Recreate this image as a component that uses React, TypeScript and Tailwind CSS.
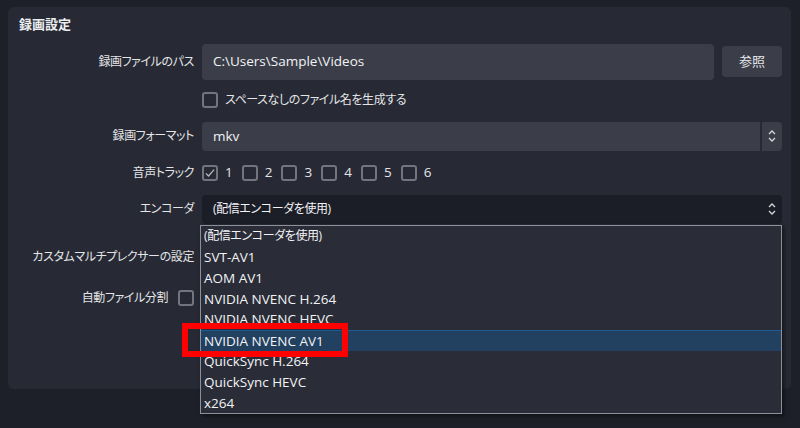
import React from "react";

const FONT = "font-['Open_Sans','Noto_Sans_CJK_JP',sans-serif] [font-feature-settings:'palt']";
// Japanese text renders a bit wider than the original UI font, so tighten it
const JP = "text-[12px] tracking-[-0.4px]";

const encoders = [
  "(配信エンコーダを使用)",
  "SVT-AV1",
  "AOM AV1",
  "NVIDIA NVENC H.264",
  "NVIDIA NVENC HEVC",
  "NVIDIA NVENC AV1",
  "QuickSync H.264",
  "QuickSync HEVC",
  "x264",
];

function Box({ checked = false }: { checked?: boolean }) {
  return (
    <span className="flex h-4 w-4 shrink-0 items-center justify-center rounded-[3px] border-2 border-[#72757e]">
      {checked && (
        <svg viewBox="0 0 16 16" className="h-3 w-3" fill="none" stroke="#b8bac0" strokeWidth="1.6">
          <path d="M2.5 8.5 L6 12 L13.5 3.5" />
        </svg>
      )}
    </span>
  );
}

function Chevrons() {
  return (
    <svg viewBox="0 0 10 16" className="h-4 w-[10px]" fill="none" stroke="#d6d7db" strokeWidth="1.3">
      <path d="M2 6 L5 3 L8 6" />
      <path d="M2 10 L5 13 L8 10" />
    </svg>
  );
}

function Label({ children }: { children: React.ReactNode }) {
  return <div className={`w-[186px] shrink-0 text-right text-[#e4e5e8] ${JP}`}>{children}</div>;
}

export default function App() {
  return (
    <div className={`h-[428px] w-[800px] overflow-hidden bg-[#1e2029] pl-2 pr-[9px] pt-[7px] ${FONT}`}>
      <div className="relative h-[382px] rounded-md bg-[#272a34]">
        {/* Title */}
        <div className="pl-[11px] pt-[8px] text-[13px] font-bold text-[#eceef1]">録画設定</div>

        <div className="mt-[9px] flex flex-col">
          {/* Path */}
          <div className="flex h-9 items-center gap-2">
            <Label>録画ファイルのパス</Label>
            <div className="flex h-9 flex-1 items-center rounded-[4px] bg-[#3b3e49] px-[11px] text-[13.5px] text-[#f2f3f5]">
              C:\Users\Sample\Videos
            </div>
            <button className="mr-[9px] h-[31px] w-[60px] rounded-[4px] bg-[#3b3e49] text-[13px] text-[#e4e5e8]">
              参照
            </button>
          </div>

          {/* No space */}
          <div className="mt-[12px] flex h-4 items-center gap-2">
            <div className="w-[186px] shrink-0" />
            <Box />
            <span className={`ml-[-1px] text-[#e4e5e8] ${JP}`}>スペースなしのファイル名を生成する</span>
          </div>

          {/* Format */}
          <div className="mt-[14px] flex h-[29px] items-center gap-2">
            <Label>録画フォーマット</Label>
            <div className="mr-[9px] flex h-[29px] flex-1 items-stretch rounded-[4px] bg-[#3b3e49] text-[13.5px] text-[#f2f3f5]">
              <div className="flex flex-1 items-center px-[11px]">mkv</div>
              <div className="flex w-[22px] items-center justify-center border-l-2 border-[#272a34]">
                <Chevrons />
              </div>
            </div>
          </div>

          {/* Audio tracks */}
          <div className="mt-[14px] flex h-4 items-center gap-2">
            <Label>音声トラック</Label>
            <div className="flex items-center gap-[9px] text-[13.5px] text-[#e4e5e8]">
              {[1, 2, 3, 4, 5, 6].map((n) => (
                <div key={n} className="flex items-center gap-[7px]">
                  <Box checked={n === 1} />
                  <span>{n}</span>
                </div>
              ))}
            </div>
          </div>

          {/* Encoder */}
          <div className="mt-[14px] flex h-[29px] items-center gap-2">
            <Label>エンコーダ</Label>
            <div className="mr-[9px] flex h-[29px] flex-1 items-center justify-between rounded-[4px] bg-[#1c1e27] pl-[11px] pr-[5px] text-[#f2f3f5]">
              <span className={JP}>(配信エンコーダを使用)</span>
              <Chevrons />
            </div>
          </div>

          {/* Custom muxer */}
          <div className="mt-[23px] flex h-5 items-center gap-2">
            <Label>カスタムマルチプレクサーの設定</Label>
          </div>

          {/* Auto split */}
          <div className="mt-[23px] flex h-4 items-center gap-[10px]">
            <div className={`w-[160px] shrink-0 text-right text-[#e4e5e8] ${JP}`}>自動ファイル分割</div>
            <Box />
          </div>
        </div>

        {/* Dropdown list */}
        <div className="absolute left-[192px] top-[218px] w-[582px] border border-[#8d9099] bg-[#2a2c37] shadow-[2px_2px_4px_rgba(0,0,0,0.5)]">
          {encoders.map((e, i) => (
            <div
              key={e}
              className={
                i === 5
                  ? "flex h-[20.8px] items-center border-t border-[#1d5a92] bg-[#22405f] pl-[3px] text-[13.5px] text-[#f2f3f5]"
                  : "flex h-[20.8px] items-center pl-[3px] text-[13.5px] text-[#f2f3f5]"
              }
            >
              {i === 0 ? <span className={JP}>{e}</span> : e}
            </div>
          ))}
        </div>
      </div>

      {/* Red highlight */}
      <div className="absolute left-[182px] top-[323px] h-[34px] w-[166px] border-[6px] border-[#ff0000]" />
    </div>
  );
}
